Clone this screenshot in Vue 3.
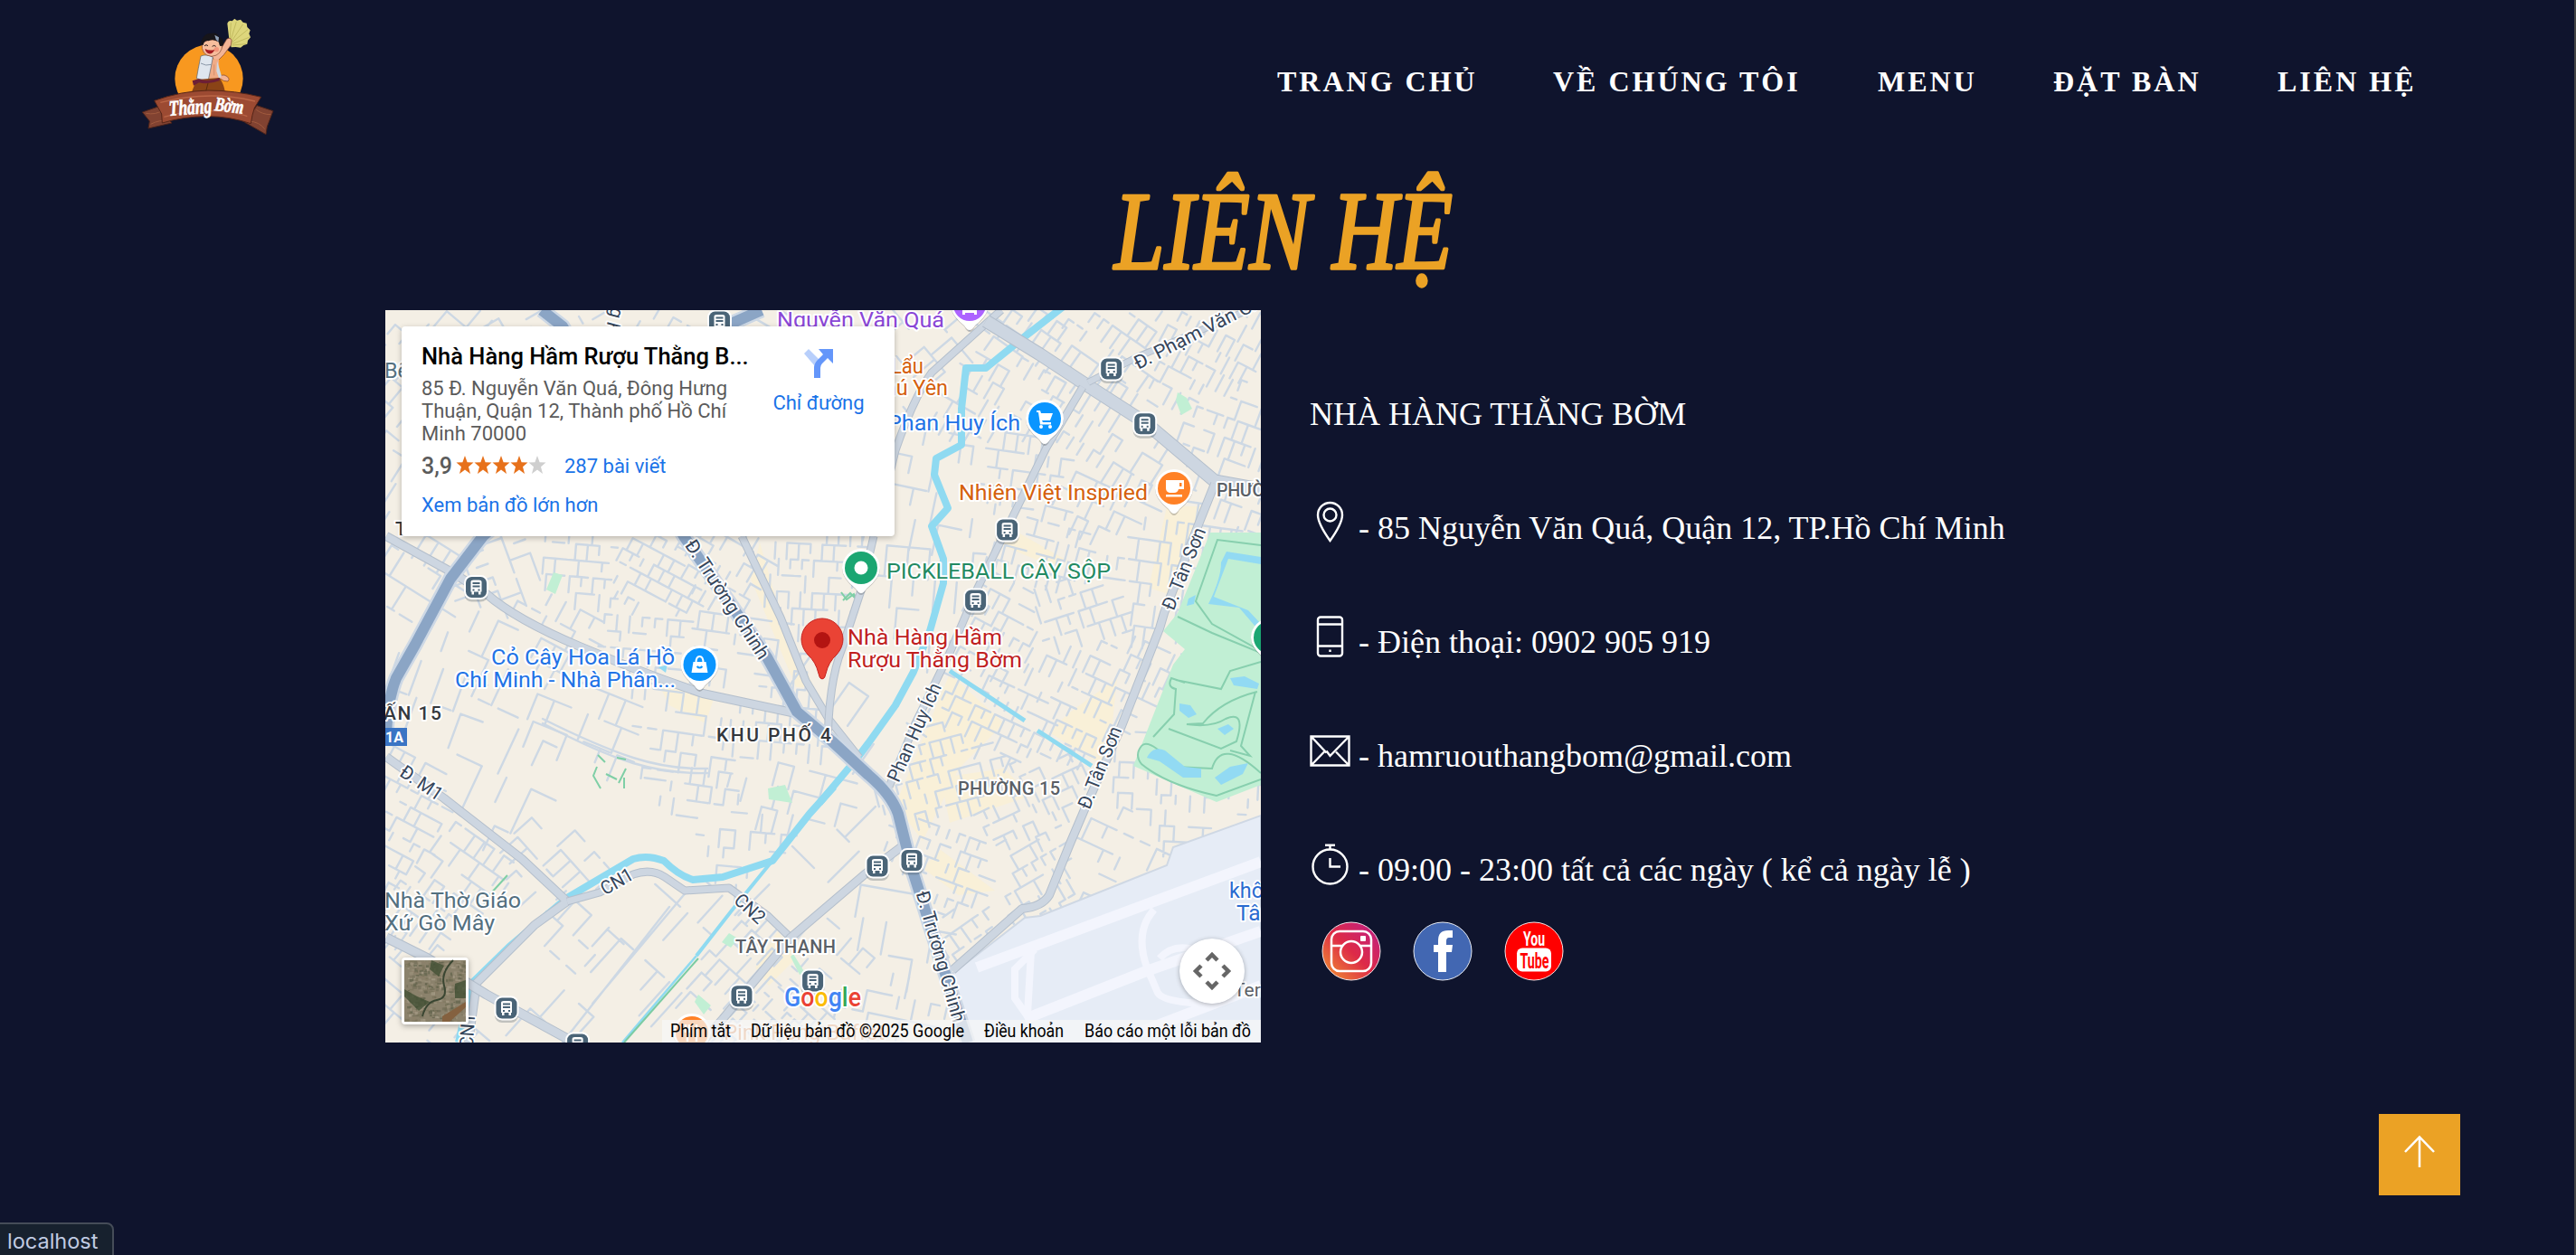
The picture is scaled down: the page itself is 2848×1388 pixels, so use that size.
<script setup>
const nav = [
  { t: 'TRANG CHỦ', w: 218 },
  { t: 'VỀ CHÚNG TÔI', w: 272 },
  { t: 'MENU', w: 107 },
  { t: 'ĐẶT BÀN', w: 161 },
  { t: 'LIÊN HỆ', w: 150 },
]

/* Minor streets: one rotated lattice per neighbourhood, cut where the next one begins.
   x, y, angle in degrees, column step, row step, share of edges kept */
const areas = [
  [450, 370, 40, 17, 24, 0.7], [640, 350, 60, 16, 26, 0.7], [760, 360, 30, 18, 22, 0.7],
  [1010, 370, 50, 18, 30, 0.6], [1130, 350, 35, 13, 18, 0.8], [1230, 360, 35, 12, 22, 0.8],
  [1330, 380, 28, 11, 20, 0.75], [1380, 470, 20, 12, 22, 0.75], [1230, 480, 32, 13, 26, 0.75],
  [1110, 430, 30, 14, 20, 0.75], [1120, 520, 8, 14, 20, 0.75], [1220, 560, 25, 13, 22, 0.75],
  [1010, 540, 12, 26, 34, 0.45], [1010, 640, 5, 24, 34, 0.4], [1170, 600, 15, 12, 18, 0.8],
  [1180, 680, -18, 13, 19, 0.8], [1260, 620, 8, 12, 24, 0.8], [1110, 700, 28, 12, 18, 0.8],
  [1190, 740, 25, 12, 20, 0.8], [1100, 790, 25, 12, 18, 0.8], [1060, 850, -15, 12, 18, 0.75],
  [1120, 900, -25, 12, 17, 0.8], [1060, 960, 20, 12, 18, 0.75], [1130, 960, -30, 12, 18, 0.75],
  [1220, 940, 25, 20, 26, 0.5], [1300, 880, 3, 16, 17, 0.5], [1090, 1030, -35, 15, 20, 0.7],
  [460, 620, 32, 16, 30, 0.6], [560, 610, 70, 16, 24, 0.7], [640, 620, 5, 13, 18, 0.8],
  [720, 640, 28, 13, 15, 0.85], [800, 610, 30, 13, 16, 0.8], [900, 620, 3, 13, 18, 0.8],
  [620, 690, 28, 18, 24, 0.7], [700, 700, 5, 14, 18, 0.8], [540, 730, 25, 24, 44, 0.55],
  [490, 740, 20, 26, 40, 0.5], [800, 720, 8, 16, 20, 0.7], [650, 790, 22, 20, 30, 0.7],
  [750, 810, 8, 17, 22, 0.75], [850, 800, 5, 14, 20, 0.7], [860, 870, 15, 18, 26, 0.6],
  [960, 770, 35, 26, 40, 0.35], [560, 860, 25, 30, 54, 0.5], [450, 910, 28, 13, 17, 0.85],
  [500, 960, 35, 13, 22, 0.85], [640, 880, 20, 50, 60, 0.2], [760, 885, 8, 15, 18, 0.7],
  [830, 920, 5, 17, 20, 0.65], [620, 940, 48, 16, 26, 0.7], [730, 920, 30, 80, 80, 0.1],
  [560, 1060, 45, 34, 50, 0.2], [640, 1040, 42, 24, 30, 0.6], [700, 1050, 42, 18, 50, 0.65],
  [760, 1010, 42, 24, 40, 0.5], [830, 1060, 42, 15, 24, 0.7], [640, 1110, 42, 22, 40, 0.5],
  [900, 960, 45, 34, 48, 0.45], [930, 1060, 40, 17, 24, 0.7], [980, 1020, 10, 26, 36, 0.6],
  [870, 1120, 42, 11, 15, 0.8], [960, 1120, 12, 18, 24, 0.7], [470, 1120, 40, 16, 22, 0.5],
]
let seed = 77
const rnd = () => {
  seed = (seed * 1664525 + 1013904223) % 4294967296
  return seed / 4294967296
}
const nearest = (x, y) => {
  let b = 0
  let bd = 1e9
  areas.forEach((a, i) => {
    const d = (a[0] - x) ** 2 + (a[1] - y) ** 2
    if (d < bd) { bd = d; b = i }
  })
  return b
}
let streets = ''
areas.forEach((a, i) => {
  const [cx, cy, deg, sx, sy, p] = a
  const c = Math.cos((deg * Math.PI) / 180)
  const s = Math.sin((deg * Math.PI) / 180)
  const n = Math.ceil(100 / Math.min(sx, sy))
  const at = (u, v) => [cx + u * c - v * s, cy + u * s + v * c]
  for (let r = -n; r <= n; r++) {
    for (let q = -n; q <= n; q++) {
      const u = q * sx + (r % 2) * sx * 0.35
      const v = r * sy
      const [x, y] = at(u, v)
      const k1 = rnd()
      const k2 = rnd()
      const f = rnd() < 0.3 ? 0.55 : 1
      if (x < 420 || x > 1400 || y < 340 || y > 1156 || nearest(x, y) !== i) continue
      if (k1 < p * 0.85) {
        const e = at(u + sx * f, v)
        streets += `M${x.toFixed(1)} ${y.toFixed(1)}L${e[0].toFixed(1)} ${e[1].toFixed(1)}`
      }
      if (k2 < p * 0.85) {
        const e = at(u, v + sy * f)
        streets += `M${x.toFixed(1)} ${y.toFixed(1)}L${e[0].toFixed(1)} ${e[1].toFixed(1)}`
      }
    }
  }
})

const arterials = [
  ['M1107 343L1090 358L1030 412Q1010 440 990 498L975 560', 7],
  ['M1090 355L1150 392L1197 423L1267 468L1343 532L1394 541', 13],
  ['M1197 428L1157 495L1113 585L1080 652L1050 722L1012 800L983 870', 7],
  ['M1203 423L1257 395L1380 343', 6],
  ['M1343 535L1327 575L1287 678L1282 695L1240 803L1200 893L1183 933L1160 990Q1152 1003 1130 1005L1053 1073', 8],
  ['M427 593L498 632L538 657Q570 685 641 715T777 767L880 789', 8],
  ['M820 593L863 683L891 753L916 795L950 838', 7],
  ['M966 593L952 653L931 717Q919 747 916 797L915 820', 7],
  ['M427 837L491 883L577 950L627 997L591 1023L527 1087L518 1153', 8],
  ['M627 997L663 987L700 967Q720 960 735 970L757 985L806 982L849 1013L874 1037', 7],
  ['M1000 934L956 967L874 1037L799 1127L776 1153', 8],
  ['M427 1037L473 1060L538 1100L635 1153', 9],
]
const highways = [
  'M599 343L622 361L756 593L848 727L881 787L920 820L960 857Q985 878 993 900L1008 960L1023 1007L1047 1083L1070 1153',
  'M842 343L808 358L534 593L498 640L459 713L438 750Q428 775 427 815',
]
const buses = [
  [1228.7, 408], [1265.7, 468.7], [1113.6, 586], [1078.6, 664], [526.5, 649.5], [970, 958],
  [1008, 951.6], [560, 1115], [820, 1101.7], [898.6, 1085], [638.6, 1155], [795.5, 356],
]
const pins = [
  { x: 1155, y: 463, c: '#0a95ff', k: 'cart' },
  { x: 1298, y: 540, c: '#ff8126', k: 'cup' },
  { x: 952, y: 628, c: '#1ba672', k: 'dot' },
  { x: 773.5, y: 735, c: '#0a95ff', k: 'bag' },
  { x: 1072, y: 337, c: '#ad63ff', k: 'bed' },
  { x: 1404, y: 705, c: '#1ba672', k: 'dot' },
  { x: 765, y: 1142, c: '#ff8126', k: 'food' },
]
/* text, x, baseline, width, class */
const labels = [
  ['Nguyễn Văn Quá', 859, 362, 185, 'purple'],
  ['Lẩu', 985, 413, 36, 'orange'],
  ['Phú Yên', 963, 437, 85, 'orange'],
  ['Phan Huy Ích', 981, 476, 147, 'blue'],
  ['Nhiên Việt Inspried', 1060, 553, 209, 'orange'],
  ['PICKLEBALL CÂY SỘP', 980, 640, 248, 'green'],
  ['Nhà Hàng Hầm', 937, 713, 171, 'red'],
  ['Rượu Thằng Bờm', 937, 738, 193, 'red'],
  ['Cỏ Cây Hoa Lá Hồ', 543, 735, 203, 'blue'],
  ['Chí Minh - Nhà Phân...', 503, 760, 244, 'blue'],
  ['Nhà Thờ Giáo', 425, 1004, 151, 'slate'],
  ['Xứ Gò Mây', 425, 1029, 122, 'slate'],
  ['Bế', 425, 418, 27, 'slate'],
  ['không', 1359, 993, 64, 'deep'],
  ['Tân', 1367, 1018, 40, 'deep'],
]
const places = [
  ['PHƯỜNG 15', 1059, 879, 113, 'mid'],
  ['PHƯỜNG', 1345, 549, 80, 'mid'],
  ['TÂY THẠNH', 813, 1054, 111, 'mid'],
  ['KHU PHỐ 4', 792, 820, 127, 'dark'],
  ['ẤN 15', 424, 796, 64, 'dark'],
  ['T', 437, 592, 12, 'dark'],
]
const roadNames = [
  ['Đ. Phạm Văn Chiêu', 1337, 361, -27, 184],
  ['Đ. Tân Sơn', 1309, 629, -68, 96],
  ['Đ. Tân Sơn', 1216, 849, -68, 96],
  ['Phan Huy Ích', 1011, 810, -66, 117],
  ['Đ. Trường Chinh', 804, 663, 57, 153],
  ['Đ. Trường Chinh', 1040, 1058, 74, 150],
  ['Đ. M1', 466, 866, 34, 52],
  ['CN1', 682, 975, -30, 38],
  ['CN2', 829, 1005, 43, 38],
  ['CN1', 517, 1140, -86, 38],
  ['Trường H', 686, 330, 105, 84],
]

/* satellite thumbnail: small tinted patches */
const patches = Array.from({ length: 420 }, () => ({
  x: rnd() * 68, y: rnd() * 68, w: 1.5 + rnd() * 4, h: 1 + rnd() * 3,
  c: ['#a39781', '#6e6a54', '#8d806a', '#545942', '#b3a893', '#777158'][Math.floor(rnd() * 6)],
}))
</script>

<template>
  <div class="page">
    <header>
      <svg class="logo" viewBox="0 0 540 510" width="180" height="170">
        <circle cx="273" cy="261" r="113" fill="#f8981f" />
        <path d="M340 130L334 78Q338 66 350 70L358 62L366 68L378 65L386 74L398 77L400 90L410 100L406 112L411 124L402 134L400 146L388 150L378 158L362 156L347 157Z" fill="#ddd67c" />
        <path d="M342 138L346 76M344 138L364 72M346 140L386 80M348 142L402 98M350 146L406 124M350 150L396 146" stroke="#b5ad52" stroke-width="2" fill="none" />
        <path d="M282 186L314 160L332 130Q344 122 348 134L346 150L322 182L296 208Z" fill="#f3b495" stroke="#7c3f2b" stroke-width="2" />
        <path d="M310 250Q326 246 334 254Q344 262 336 270L322 268L306 258Z" fill="#f3b495" stroke="#7c3f2b" stroke-width="2" />
        <path d="M272 196H306L308 262H272Z" fill="#f0ab86" />
        <path d="M290 214V250" stroke="#cd8260" stroke-width="2" />
        <path d="M246 186Q266 178 286 190L280 222L270 270L232 260L238 226Z" fill="#dfe6ee" stroke="#56616e" stroke-width="2" />
        <path d="M300 202L314 250L308 264L298 236Z" fill="#cfd8e2" />
        <path d="M246 210Q262 220 282 214" stroke="#8b98a8" stroke-width="3" fill="none" />
        <path d="M236 264L308 258Q322 276 328 312H214Q224 280 236 264Z" fill="#8a4316" />
        <path d="M238 262Q270 274 308 258L308 268Q270 282 240 274L222 284L218 268Z" fill="#6d1f36" />
        <path d="M270 276L262 306" stroke="#5a2a0d" stroke-width="3" />
        <path d="M250 142Q246 184 282 187Q316 184 318 146Q290 120 250 142Z" fill="#f7bd9c" stroke="#7c3f2b" stroke-width="2" />
        <path d="M246 148Q250 108 286 110Q300 108 306 122Q324 126 320 150Q308 160 306 140Q286 126 272 136Q258 132 254 150Z" fill="#17151a" />
        <path d="M292 116L306 124L304 140L296 130Z" fill="#8fa0b8" />
        <path d="M260 162Q276 170 292 164Q286 180 272 178Q262 174 260 162Z" fill="#a81e22" />
        <path d="M258 152Q264 146 270 152M284 154Q290 148 296 154" stroke="#2b1a18" stroke-width="3" fill="none" />
        <circle cx="298" cy="164" r="8" fill="#ee7c66" opacity=".6" />
        <path d="M52 372L104 354L150 408L72 426L76 402Z" fill="#814231" stroke="#4b231a" stroke-width="3" />
        <path d="M486 368L432 350L392 406L462 446L466 420Z" fill="#814231" stroke="#4b231a" stroke-width="3" />
        <path d="M64 376Q96 382 120 366M80 412Q110 396 136 402M478 380Q450 380 430 364M458 428Q440 404 406 402" stroke="#a05a3e" stroke-width="3" fill="none" />
        <path d="M92 334Q180 302 270 300Q360 300 446 322L424 358Q416 380 412 410Q340 386 270 386Q190 386 118 408L116 378Z" fill="#9c4a32" stroke="#552518" stroke-width="3" />
        <path d="M112 340Q200 318 280 318T426 336M124 388Q200 366 280 368T400 386" stroke="#bb6647" stroke-width="4" fill="none" />
        <g fill="#fff" stroke="#fff" stroke-width="2" font-family="'Liberation Serif', serif" font-style="italic" font-weight="700">
          <text x="142" y="384" font-size="72" textLength="142" lengthAdjust="spacingAndGlyphs" transform="rotate(-4 142 384)">Thằng</text>
          <text x="290" y="366" font-size="66" textLength="96" lengthAdjust="spacingAndGlyphs" transform="rotate(7 290 366)">Bờm</text>
        </g>
      </svg>
      <nav>
        <a v-for="n in nav" :key="n.t" :style="{ width: n.w + 'px' }">{{ n.t }}</a>
      </nav>
    </header>

    <h1>
      <svg width="440" height="150" viewBox="1200 180 440 150">
        <text x="1232" y="297" textLength="374" lengthAdjust="spacingAndGlyphs">LIÊN HỆ</text>
      </svg>
    </h1>

    <main>
      <div class="map">
        <svg class="canvas" viewBox="426 343 968 810" width="968" height="810">
          <rect x="426" y="343" width="968" height="810" fill="#f4efe5" />
          <g fill="#f9f0d8">
            <path d="M1050 745L1110 800L1060 850L1020 930L990 890Z" />
            <path d="M1180 790L1235 750L1225 850L1160 810Z" />
            <path d="M1040 860L1110 850L1140 880L1050 910Z" />
            <path d="M1020 960L1060 990L1100 985L1040 940Z" />
            <path d="M840 600L866 690L900 760L880 760L830 640Z" />
            <path d="M1290 560L1335 560L1300 660L1270 650Z" />
            <path d="M1110 580L1180 620L1160 625L1100 600Z" />
            <path d="M730 760L790 770L780 800L740 780Z" />
            <path d="M860 1030L880 1060L850 1090L835 1070Z" />
          </g>
          <path :d="streets" class="streets" />
          <path class="streets" d="M600 795Q660 825 700 838T782 850M600 800Q660 832 700 844T782 855M655 1110L760 985M622 1153L740 1003" />
          <g fill="#c1efd4">
            <path d="M1338 589H1394V868L1345 887L1253 847L1297 735L1310 718L1286 698L1302 678Z" />
            <path d="M612 633L622 636L614 657L604 652Z" />
            <path d="M849 872L868 868L876 888L850 884Z" />
            <path d="M1302 434L1312 440L1318 452L1306 459L1300 443Z" />
            <path d="M806 1032L816 1038L808 1048L798 1042Z" />
            <path d="M772 1100L786 1112L778 1122L768 1108Z" />
            <path d="M877 1055L890 1076L884 1078L874 1058Z" />
          </g>
          <path d="M1394 603L1346 597L1322 665L1340 690L1394 720M1302 682L1340 700L1394 722M1310 755L1295 750Q1290 760 1300 762L1298 790L1275 815M1300 752L1350 762L1360 742L1394 732M1390 765Q1350 775 1330 800L1312 801Q1340 805 1355 795Q1378 785 1367 820L1350 828L1292 806M1388 765L1372 825L1382 836L1360 830M1394 855Q1350 815 1340 850L1300 848Q1270 815 1262 825T1262 845Q1290 868 1345 880L1394 862" fill="none" stroke="#87cfae" stroke-width="2" />
          <g fill="#92daf3">
            <path d="M1356 610L1394 616V624L1358 618L1342 660L1380 675L1394 690V700L1370 672L1336 668Q1350 640 1350 622Z" />
            <path d="M1360 750L1376 748L1392 756L1390 762L1364 758Z" />
            <path d="M1304 778L1316 780L1323 790L1314 794L1304 786Z" />
            <path d="M1346 806L1358 801L1364 806L1354 813Z" />
            <path d="M1268 838Q1275 824 1288 830L1310 848L1328 850L1328 860L1308 860L1282 842Z" />
            <path d="M1360 848L1380 844L1374 856L1350 868L1343 860Z" />
            <path d="M1314 662L1322 658L1320 668L1312 670Z" />
            <path d="M728 738L738 735L736 744Z" />
          </g>
          <path d="M1053 1077L1133 1015L1150 1013L1290 957L1297 937L1394 902V1153H1072Z" fill="#e6ecf6" stroke="#cfd8e4" stroke-width="2" />
          <g fill="none" stroke="#f3f5fd">
            <path d="M1080 1070L1394 953" stroke-width="12" />
            <path d="M1133 1127L1270 1073L1394 1030" stroke-width="12" />
            <path d="M1230 1153L1394 1090" stroke-width="12" />
            <path d="M1144 1050L1122 1072V1104L1136 1124M1140 1052L1136 1122M1276 1006Q1254 1030 1268 1070L1280 1098Q1286 1108 1330 1110M1282 1060Q1300 1040 1330 1054" stroke-width="8" />
          </g>
          <g fill="none" stroke="#8fdaf1" stroke-linejoin="round">
            <path d="M1177 338L1132 373L1090 407L1068 407L1063 452V492L1035 507L1033 525L1048 562L1030 582L1043 618V645L1028 698L1010 743L990 780L960 822L948 838L906 888" stroke-width="8" />
            <path d="M922 870L895 900L854 952L799 970L766 973Q750 968 734 952Q716 945 700 950L627 993L563 1047L522 1087L507 1153" stroke-width="8" />
            <path d="M853 953L809 1007L770 1057" stroke-width="4" />
            <path d="M770 1057L688 1153" stroke-width="2.5" />
            <path d="M1050 742L1133 797M1147 808L1207 847" stroke-width="5" />
          </g>
          <path d="M772 1060L690 1153" fill="none" stroke="#7acba2" stroke-width="2" />
          <g fill="none" stroke="#7fcfa6" stroke-width="2">
            <path d="M661 835l8 8M682 838l10 2M692 850l-8 16M670 856l12 6M660 848l-4 10 8 14M690 860v12M541 990l20-22M536 1000l8-10M930 655l6 8 8-6 4 8M932 664l8-8 6 6" />
          </g>
          <g v-for="(r, i) in arterials" :key="'r' + i" fill="none" stroke-linejoin="round">
            <path :d="r[0]" stroke="#b4bfcc" :stroke-width="r[1] + 2" />
            <path :d="r[0]" stroke="#cdd6e1" :stroke-width="r[1]" />
          </g>
          <g v-for="(h, i) in highways" :key="'h' + i" fill="none" stroke-linejoin="round">
            <path :d="h" stroke="#cdd8e5" stroke-width="17" />
            <path :d="h" stroke="#8ba5c5" stroke-width="12" />
          </g>
          <rect x="424" y="805" width="26" height="20" fill="#3a74c4" />
          <text x="426" y="821" class="shield">1A</text>

          <text v-for="(l, i) in roadNames" :key="'n' + i" class="road" :transform="`translate(${l[1]} ${l[2]}) rotate(${l[3]})`" y="7" text-anchor="middle" :textLength="l[4]" lengthAdjust="spacingAndGlyphs">{{ l[0] }}</text>
          <text v-for="(l, i) in places" :key="'p' + i" :class="['place', l[4]]" :x="l[1]" :y="l[2]" :textLength="l[3]">{{ l[0] }}</text>

          <g v-for="(b, i) in buses" :key="'b' + i" :transform="`translate(${b[0]} ${b[1]})`">
            <rect x="-13" y="-11" width="26" height="27" rx="8" fill="#4a5560" opacity=".3" />
            <rect x="-13.5" y="-13.5" width="27" height="27" rx="8.5" fill="#fff" />
            <rect x="-11.5" y="-11.5" width="23" height="23" rx="6.5" fill="#4a6477" />
            <path d="M-6-6Q-6-8-3-8H3Q6-8 6-6V5H5V8H2.500V5H-2.500V8H-5V5H-6Z" fill="#fff" />
            <path d="M-4-4.500H4M-4-1H4" stroke="#4a6477" stroke-width="2" />
            <path d="M-4 3h2M2 3h2" stroke="#4a6477" stroke-width="2" />
          </g>
          <g v-for="(p, i) in pins" :key="'i' + i" :transform="`translate(${p.x} ${p.y})`">
            <path d="M0 30Q3 30 6 24Q21 12 21 1A21 21 0 1 0-21 1Q-21 12-6 24Q-3 30 0 30Z" fill="#333" opacity=".25" />
            <path d="M0 28Q3 28 6 23Q21 11 21 0A21 21 0 1 0-21 0Q-21 11-6 23Q-3 28 0 28Z" fill="#fff" />
            <circle r="18" :fill="p.c" />
            <g v-if="p.k === 'cart'" fill="#fff">
              <path d="M-9-9H-5L-4-6H9L6 2H-3L-2 4H7V6.500H-5L-7-7H-9Z" />
              <circle cx="-4" cy="9" r="2" /><circle cx="6" cy="9" r="2" />
            </g>
            <g v-else-if="p.k === 'cup'">
              <path d="M-9-9H11V1H5Q4 5 0 5H-5Q-9 4-9 0ZM-9 7H9V9.500H-9Z" fill="#fff" />
              <path d="M6-6H8.500V-2H6Z" fill="#ff8126" />
            </g>
            <g v-else-if="p.k === 'bag'">
              <path d="M-7-3H7L9 9H-9Z" fill="#fff" />
              <path d="M-4-2Q-4-9 0-9T4-2" fill="none" stroke="#fff" stroke-width="2" />
              <path d="M-3 2Q0 5 3 2" fill="none" stroke="#0a95ff" stroke-width="2" />
            </g>
            <path v-else-if="p.k === 'bed'" d="M-8 2H8V11H5V9H-5V11H-8Z" fill="#fff" />
            <path v-else-if="p.k === 'food'" d="M-7-9V0M-3-9V0M-5 0V10M5-9V10" stroke="#fff" stroke-width="2.500" />
            <circle v-else r="7.500" fill="#fff" />
          </g>
          <text v-for="(l, i) in labels" :key="'l' + i" :class="['poi', l[4]]" :x="l[1]" :y="l[2]" :textLength="l[3]" lengthAdjust="spacingAndGlyphs">{{ l[0] }}</text>
          <text x="1364" y="1102" class="poi small">Terminal</text>
          <text x="800" y="1150" class="poi orange" opacity=".7" textLength="178">Pink Pong Buffet</text>

          <path d="M909 751Q906 751 905 745Q902 732 893 724Q886 716 886 707A23 23 0 0 1 932 707Q932 716 925 724Q916 732 913 745Q912 751 909 751Z" fill="#ea4335" stroke="#c5221f" stroke-width="1" />
          <circle cx="909" cy="708" r="9" fill="#b31412" />

          <text x="867" y="1113" class="google" textLength="85" lengthAdjust="spacingAndGlyphs"><tspan fill="#4285f4">G</tspan><tspan fill="#ea4335">o</tspan><tspan fill="#fbbc05">o</tspan><tspan fill="#4285f4">g</tspan><tspan fill="#34a853">l</tspan><tspan fill="#ea4335">e</tspan></text>

          <rect x="732" y="1128" width="662" height="25" fill="#f6f6f6" opacity=".72" />
          <g class="terms">
            <text x="741" y="1147" textLength="67" lengthAdjust="spacingAndGlyphs">Phím tắt</text>
            <text x="830" y="1147" textLength="236" lengthAdjust="spacingAndGlyphs">Dữ liệu bản đồ ©2025 Google</text>
            <text x="1088" y="1147" textLength="88" lengthAdjust="spacingAndGlyphs">Điều khoản</text>
            <text x="1199" y="1147" textLength="184" lengthAdjust="spacingAndGlyphs">Báo cáo một lỗi bản đồ</text>
          </g>
        </svg>

        <section class="card">
          <div class="info">
            <h2>Nhà Hàng Hầm Rượu Thằng B...</h2>
            <p>85 Đ. Nguyễn Văn Quá, Đông Hưng<br />Thuận, Quận 12, Thành phố Hồ Chí<br />Minh 70000</p>
            <div class="rating">
              <b>3,9</b>
              <svg width="100" height="22" viewBox="0 0 100 22">
                <path v-for="n in 5" :key="n" :transform="`translate(${(n - 1) * 20} 0)`" :fill="n < 5 ? '#e7711b' : '#cfcfcf'" d="M10 0L12.600 7.200L19.500 7.600L14 12.300L16 20L10 15.600L4 20L6 12.300L0.500 7.600L7.400 7.200Z" />
              </svg>
              <a>287 bài viết</a>
            </div>
            <a class="larger">Xem bản đồ lớn hơn</a>
          </div>
          <div class="go">
            <svg width="34" height="34" viewBox="0 0 34 34">
              <path d="M1 6L6 1L18 13L13 20Z" fill="#b8cffb" />
              <path d="M12 33V22Q12 17 16 13L22 7L17 1H33V17L27 11L21 17Q19 19 19 22V33Z" fill="#6496fa" />
            </svg>
            <a>Chỉ đường</a>
          </div>
        </section>

        <svg class="sat" width="74" height="74" viewBox="-3 -3 74 74">
          <rect x="-3" y="-3" width="74" height="74" rx="4" fill="#fff" />
          <rect width="68" height="68" fill="#8b826c" />
          <rect v-for="(p, i) in patches" :key="i" :x="p.x" :y="p.y" :width="Math.min(p.w, 68 - p.x)" :height="Math.min(p.h, 68 - p.y)" :fill="p.c" opacity=".55" />
          <path d="M30 0L44 6L38 18L28 10ZM56 26L68 22V42L56 42ZM0 32L14 40L28 46L16 56L0 40Z" fill="#3c4c30" opacity=".75" />
          <path d="M54 0Q40 14 44 28T36 44T20 62" stroke="#3a4632" stroke-width="2" fill="none" />
          <path d="M42 62L68 46V52L50 68H42Z" fill="#84613f" />
        </svg>
        <svg class="pan" width="72" height="72" viewBox="-36 -36 72 72">
          <circle r="36" fill="#fff" />
          <path d="M-6-12L0-18L6-12M-6 12L0 18L6 12M-12-6L-18 0L-12 6M12-6L18 0L12 6" fill="none" stroke="#666" stroke-width="4.500" />
        </svg>
      </div>

      <div class="contact">
        <p class="name">NHÀ HÀNG THẰNG BỜM</p>
        <p>
          <svg viewBox="0 0 46 46"><path d="M22.500 43Q9 24 9 14.500A13.500 13.500 0 0 1 36 14.500Q36 24 22.500 43Z" /><circle cx="22.500" cy="14.500" r="7" /></svg>
          <span>- 85 Nguyễn Văn Quá, Quận 12, TP.Hồ Chí Minh</span>
        </p>
        <p>
          <svg viewBox="0 0 46 46"><rect x="9" y="1.500" width="27" height="43" rx="3" /><path d="M9 9.500H36M9 33.500H36M22.500 37.500V40" /></svg>
          <span>- Điện thoại: 0902 905 919</span>
        </p>
        <p>
          <svg viewBox="0 0 46 46"><path d="M1.500 7.500H43.500V39.500H1.500ZM2 8L18.500 25.500M43 8L22.500 29L18.500 23.500M2 39L16 24.500M43 39L29 24.500" /></svg>
          <span>- hamruouthangbom@gmail.com</span>
        </p>
        <p>
          <svg viewBox="0 0 46 46"><circle cx="22.500" cy="25.500" r="19" /><path d="M22.500 7V1.500M17 1.800H28M22.500 16V25.500H34" /></svg>
          <span>- 09:00 - 23:00 tất cả các ngày ( kể cả ngày lễ )</span>
        </p>
        <div class="social">
          <svg viewBox="-33 -33 66 66">
            <defs>
              <linearGradient id="insta" x1="0" y1="1" x2="1" y2="0">
                <stop offset=".1" stop-color="#ee8433" /><stop offset=".5" stop-color="#dd2a47" /><stop offset=".9" stop-color="#c3207c" />
              </linearGradient>
            </defs>
            <circle r="32" fill="url(#insta)" stroke="#f3e5ea" />
            <g fill="none" stroke="#fff" stroke-width="2.500">
              <rect x="-22" y="-22" width="44" height="44" rx="9" />
              <circle cy="1" r="12" /><path d="M-22-6H-10M10-6H22" />
            </g>
            <rect x="10" y="-17" width="6" height="6" rx="1" fill="#fff" />
          </svg>
          <svg viewBox="-33 -33 66 66">
            <circle r="32" fill="#4267b2" stroke="#e8ecf5" />
            <path d="M-5 23V1H-10V-7H-5V-12Q-5-23 6-23H11V-15H7Q4-15 4-11V-7H11L10 1H4V23Z" fill="#fff" />
          </svg>
          <svg viewBox="-33 -33 66 66">
            <circle r="32" fill="#f00" stroke="#fbe4e4" />
            <rect x="-19" y="-3.500" width="38" height="26" rx="6" fill="#fff" />
            <g font-family="Roboto, sans-serif" font-weight="700">
              <text x="-12" y="-6" font-size="22" fill="#fff" textLength="24" lengthAdjust="spacingAndGlyphs">You</text>
              <text x="-15.500" y="18.500" font-size="23" fill="#f00" textLength="32" lengthAdjust="spacingAndGlyphs">Tube</text>
            </g>
          </svg>
        </div>
      </div>
    </main>

    <a class="top">
      <svg width="90" height="90" viewBox="0 0 90 90"><path d="M45 59V25M29 42L45 25.500L61 42" /></svg>
    </a>
    <div class="status">localhost</div>
    <div class="edge"></div>
  </div>
</template>

<style>
html, body { margin: 0; background: #0f142d; overflow: hidden; }
</style>

<style scoped>
.page {
  position: relative;
  width: 2848px;
  height: 1388px;
  overflow: hidden;
  background: #0f142d;
  color: #fff;
  font-family: "Liberation Serif", serif;
}
header {
  box-sizing: border-box;
  height: 180px;
  padding: 0 180px 0 140px;
  display: flex;
  justify-content: space-between;
  align-items: flex-start;
}
.logo { display: block; }
nav { display: flex; gap: 87px; padding-top: 72px; }
nav a {
  font-size: 32px;
  font-weight: 700;
  letter-spacing: 3px;
  line-height: 36px;
  white-space: nowrap;
}
h1 { margin: 0; height: 163px; padding-left: 1200px; }
h1 svg { display: block; overflow: visible; }
h1 text {
  font: italic 400 122px "Liberation Serif", serif;
  fill: #eba225;
  stroke: #eba225;
  stroke-width: 3.5px;
  stroke-linejoin: round;
}
main { display: flex; padding-left: 426px; gap: 54px; }
.map { position: relative; width: 968px; height: 810px; overflow: hidden; }
.canvas { display: block; }
.canvas text { font-family: Roboto, sans-serif; paint-order: stroke; stroke: #fff; stroke-width: 4px; stroke-linejoin: round; }
.streets { fill: none; stroke: #cdd8e4; stroke-width: 2.4; stroke-linecap: round; }
.poi { font-size: 24px; }
.small { font-size: 21px; fill: #5b6066; }
.purple { fill: #8a46d6; }
.orange { fill: #d5600c; }
.blue { fill: #2273e6; }
.deep { fill: #2a6bd0; }
.green { fill: #238a62; }
.red { fill: #c01f1f; }
.slate { fill: #54707f; }
.place { font-size: 20px; font-weight: 500; }
.mid { fill: #5a5f66; }
.dark { fill: #34383d; font-size: 21px; }
.road { font-size: 21px; fill: #35455a; }
.canvas .shield { font-size: 16px; font-weight: 700; fill: #fff; stroke: none; }
.google { font-size: 29px; font-weight: 500; }
.canvas .terms text { font-size: 19.5px; fill: #000; stroke: none; }
.card {
  position: absolute;
  left: 18px;
  top: 18px;
  width: 545px;
  height: 232px;
  box-sizing: border-box;
  padding: 18px 20px 0 22px;
  display: flex;
  justify-content: space-between;
  background: #fff;
  border-radius: 4px;
  box-shadow: 0 2px 6px rgba(0, 0, 0, 0.25);
  font-family: Roboto, sans-serif;
  color: #5b5b5b;
  font-size: 22px;
}
.card a { color: #1a73e8; white-space: nowrap; }
.card h2 { margin: 0; font-size: 25.500px; line-height: 30px; font-weight: 500; color: #000; white-space: nowrap; }
.card p { margin: 8px 0 0; line-height: 25px; white-space: nowrap; }
.rating { display: flex; align-items: center; height: 26px; margin-top: 10px; }
.rating b { font-size: 25px; font-weight: 500; width: 38px; }
.rating svg { margin-right: 20px; }
.larger { display: block; margin-top: 18px; line-height: 26px; }
.go { display: flex; flex-direction: column; align-items: center; padding-top: 6px; margin-right: 15px; width: 98px; }
.go a { line-height: 26px; margin-top: 14px; }
.sat { position: absolute; left: 18px; top: 716px; filter: drop-shadow(0 2px 3px rgba(0, 0, 0, 0.3)); }
.pan { position: absolute; left: 878px; top: 695px; border-radius: 50%; box-shadow: 0 1px 5px rgba(0, 0, 0, 0.3); }
.contact { padding-top: 95px; font-size: 36px; }
.contact p { margin: 0 0 85px; height: 41px; line-height: 41px; display: flex; white-space: nowrap; }
.contact p svg { width: 46px; height: 46px; margin: -9px 8px 0 0; fill: none; stroke: #fff; stroke-width: 2.400; overflow: visible; }
.contact .social { display: flex; gap: 35px; margin: -49px 0 0 13px; }
.social svg { width: 66px; height: 66px; }
.top { position: absolute; left: 2630px; top: 1232px; width: 90px; height: 90px; background: #eba225; }
.top path { fill: none; stroke: #fff; stroke-width: 2.500; }
.status {
  position: absolute;
  left: -2px;
  bottom: -2px;
  width: 116px;
  height: 34px;
  padding-left: 8px;
  background: #17212e;
  border: 2px solid #454c58;
  border-top-right-radius: 8px;
  color: #c0cbe2;
  font: 23.500px/38px Inter, sans-serif;
}
.edge { position: absolute; right: 0; top: 0; width: 2px; height: 1388px; background: #454545; }
</style>
